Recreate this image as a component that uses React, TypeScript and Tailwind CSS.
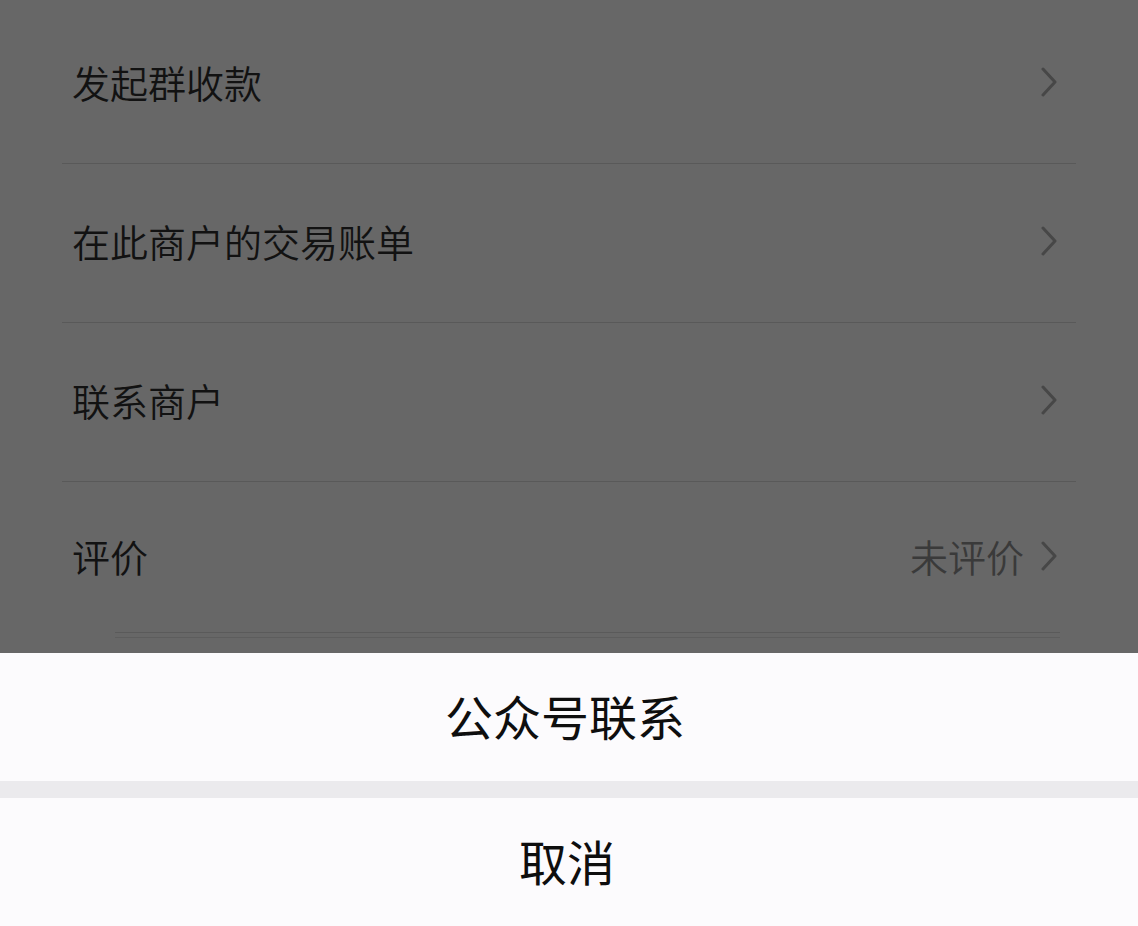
const rows = [
  { label: '发起群收款', h: 'h-[163px] pb-0' },
  { label: '在此商户的交易账单', h: 'h-[158px] pb-[4px]' },
  { label: '联系商户', h: 'h-[158px] pb-[5px]' },
]

function Chevron() {
  return (
    <svg width="18" height="30" viewBox="0 0 18 30" fill="none" className="shrink-0">
      <path d="M3 2l12 13L3 28" stroke="#474747" strokeWidth="3" strokeLinecap="round" strokeLinejoin="round" />
    </svg>
  )
}

export default function App() {
  return (
    <div
      className="w-[1138px] h-[926px] flex flex-col bg-[#676767] overflow-hidden"
      style={{ fontFamily: '"Noto Sans CJK SC", "Noto Sans", sans-serif' }}
    >
      {/* List behind the mask */}
      <div className="flex-1 flex flex-col">
        {rows.map((r) => (
          <div key={r.label} className="flex flex-col">
            <div className={`${r.h} flex items-center justify-between pl-[72px] pr-[80px]`}>
              <span className="text-[38px] leading-none font-[350] text-[#121212]">{r.label}</span>
              <Chevron />
            </div>
            <div className="h-px mx-[62px] bg-[#595959]" />
          </div>
        ))}
        <div className="h-[150px] pb-[2px] flex items-center justify-between pl-[72px] pr-[80px]">
          <span className="text-[38px] leading-none font-[350] text-[#121212]">评价</span>
          <div className="flex items-center gap-[16px]">
            <span className="text-[38px] leading-none font-[350] text-[#3a3a3a]">未评价</span>
            <Chevron />
          </div>
        </div>
        <div className="h-px ml-[115px] mr-[78px] bg-[#5a5a5a]" />
        <div className="h-[4px]" />
        <div className="h-px ml-[115px] mr-[78px] bg-[#5d5d5d]" />
      </div>

      {/* Action sheet */}
      <div className="h-[273px] flex flex-col bg-[#ebeaed]">
        <button className="h-[128px] pb-[4px] pr-[8px] flex items-center justify-center bg-[#fcfbfd] text-[48px] leading-none font-normal text-[#0e0e0e]">
          公众号联系
        </button>
        <div className="h-[17px]" />
        <button className="h-[128px] pb-[4px] pr-[4px] flex items-center justify-center bg-[#fcfbfd] text-[48px] leading-none font-normal text-[#0e0e0e]">
          取消
        </button>
      </div>
    </div>
  )
}
